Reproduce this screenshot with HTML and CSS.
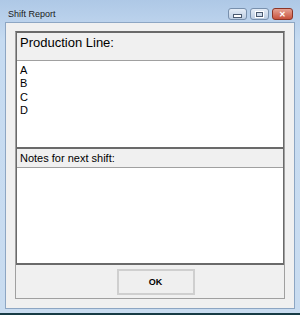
FILE: index.html
```html
<!DOCTYPE html>
<html lang="en">
  <head>
    <meta charset="UTF-8" />
    <title>Shift Report</title>
    <link rel="stylesheet" href="styles.css">
  </head>
  <body>
    <div class="window">
      <div class="titlebar">
        <span class="title">Shift Report</span>
        <div class="caption-buttons">
          <span class="cap cap-min"><i></i></span>
          <span class="cap cap-max"><i></i></span>
          <span class="cap cap-close">&#x2715;</span>
        </div>
      </div>
      <div class="client">
        <div class="layout">
          <section class="cell">
            <h2 class="cell-label big">Production Line:</h2>
            <ul class="listbox">
              <li>A</li>
              <li>B</li>
              <li>C</li>
              <li>D</li>
            </ul>
          </section>
          <section class="cell">
            <h2 class="cell-label">Notes for next shift:</h2>
            <div class="listbox"></div>
          </section>
          <div class="buttons">
            <button class="ok">OK</button>
          </div>
        </div>
      </div>
    </div>
  </body>
</html>
```

FILE: styles.css
```css
body {
  margin: 0;
  background: #173b45;
  font-family: "Liberation Sans", Arial, sans-serif;
}

.window {
  width: 300px;
  height: 315px;
  box-sizing: border-box;
  display: flex;
  flex-direction: column;
  padding: 0 5px 4px;
  background: linear-gradient(#aec8e6, #c6dbf1 40px, #c9dcf0);
  border-bottom: 2px solid #173b45;
}

.titlebar {
  height: 22px;
  display: flex;
  align-items: center;
  padding-left: 3px;
}

.title {
  font-size: 9px;
  color: #1b1b1b;
  padding-top: 5px;
}

.caption-buttons {
  margin-left: auto;
  display: flex;
  gap: 3px;
  align-self: flex-start;
  margin-top: 8px;
  margin-right: 2px;
}

.cap {
  height: 12px;
  width: 19px;
  box-sizing: border-box;
  border: 1px solid #7890ad;
  border-radius: 3px;
  background: linear-gradient(#e4ecf6, #bccde2);
  display: flex;
  align-items: center;
  justify-content: center;
}

.cap-min i {
  display: block;
  width: 7px;
  height: 2px;
  margin-top: 3px;
  background: #fff;
  border: 1px solid #4a5a70;
}

.cap-max i {
  display: block;
  width: 5px;
  height: 3px;
  border: 1px solid #4a5a70;
  outline: 1px solid #fff;
}

.cap-close {
  width: 21px;
  background: linear-gradient(#e6a293, #c8513b);
  border-color: #8c3527;
  color: #fff;
  font-size: 8px;
  font-weight: bold;
}

.client {
  flex: 1;
  background: #f0f0f0;
  border: 1px solid #8da6c3;
  padding: 8px 9px 9px 9px;
  display: flex;
}

.layout {
  flex: 1;
  display: flex;
  flex-direction: column;
  border: 1px solid #a0a0a0;
  border-top-color: #6a6a6a;
}

.cell {
  flex: 1;
  display: flex;
  flex-direction: column;
  border: 1px solid #6a6a6a;
  border-top: 0;
  border-bottom-width: 2px;
}

.cell:first-child {
  border-top: 1px solid #6a6a6a;
}

.cell-label {
  margin: 0;
  font-weight: normal;
  font-size: 11px;
  color: #000;
  padding: 3px 3px 3px;
}

.cell-label.big {
  font-size: 13px;
  padding: 2px 3px 10px;
}

.listbox {
  flex: 1;
  margin: 0;
  padding: 3px 3px 1px;
  list-style: none;
  background: #fff;
  border-top: 1px solid #a0a0a0;
  font-size: 11px;
  line-height: 13.4px;
  color: #000;
}

.buttons {
  height: 33px;
  display: flex;
  justify-content: center;
  align-items: flex-end;
  padding-bottom: 3px;
  box-sizing: border-box;
}

.ok {
  width: 78px;
  height: 26px;
  margin-left: 11px;
  background: #efefef;
  border: 2px solid #cfcfcf;
  border-radius: 0;
  font-family: "Liberation Sans", Arial, sans-serif;
  font-size: 9px;
  font-weight: bold;
  color: #000;
  cursor: pointer;
}
```
